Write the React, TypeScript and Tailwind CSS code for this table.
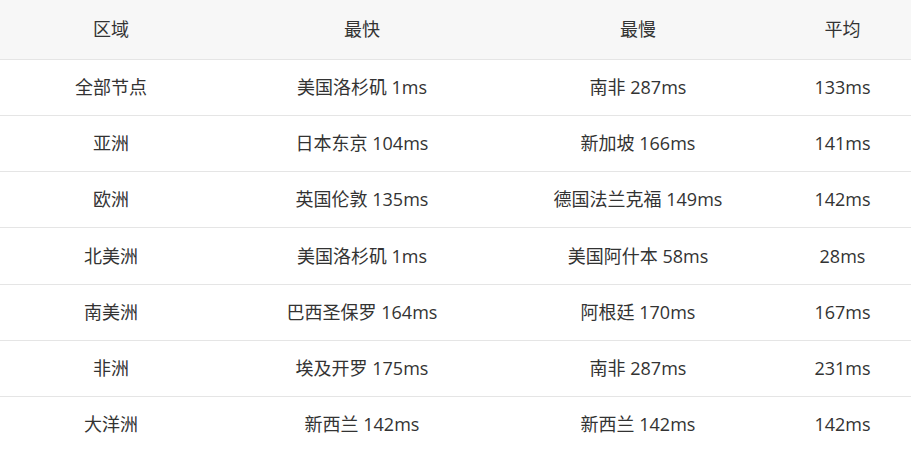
const rows: [string, string, string, string][] = [
  ["全部节点", "美国洛杉矶 1ms", "南非 287ms", "133ms"],
  ["亚洲", "日本东京 104ms", "新加坡 166ms", "141ms"],
  ["欧洲", "英国伦敦 135ms", "德国法兰克福 149ms", "142ms"],
  ["北美洲", "美国洛杉矶 1ms", "美国阿什本 58ms", "28ms"],
  ["南美洲", "巴西圣保罗 164ms", "阿根廷 170ms", "167ms"],
  ["非洲", "埃及开罗 175ms", "南非 287ms", "231ms"],
  ["大洋洲", "新西兰 142ms", "新西兰 142ms", "142ms"],
];

export default function App() {
  return (
    <div
      className="w-[911px] h-[450px] overflow-hidden bg-white text-[18px] text-[#333]"
      style={{ fontFamily: '"Open Sans", "Noto Sans CJK SC", sans-serif' }}
    >
      <div className="grid grid-cols-[222px_280px_272px_137px] h-[60px] items-center bg-[#f7f7f7] border-b border-[#e5e5e5] text-center">
        <div>区域</div>
        <div>最快</div>
        <div>最慢</div>
        <div>平均</div>
      </div>
      {rows.map((r, i) => (
        <div
          key={i}
          className="grid grid-cols-[222px_280px_272px_137px] h-[56.17px] items-center border-b border-[#e5e5e5] text-center"
        >
          <div>{r[0]}</div>
          <div>{r[1]}</div>
          <div>{r[2]}</div>
          <div>{r[3]}</div>
        </div>
      ))}
    </div>
  );
}
